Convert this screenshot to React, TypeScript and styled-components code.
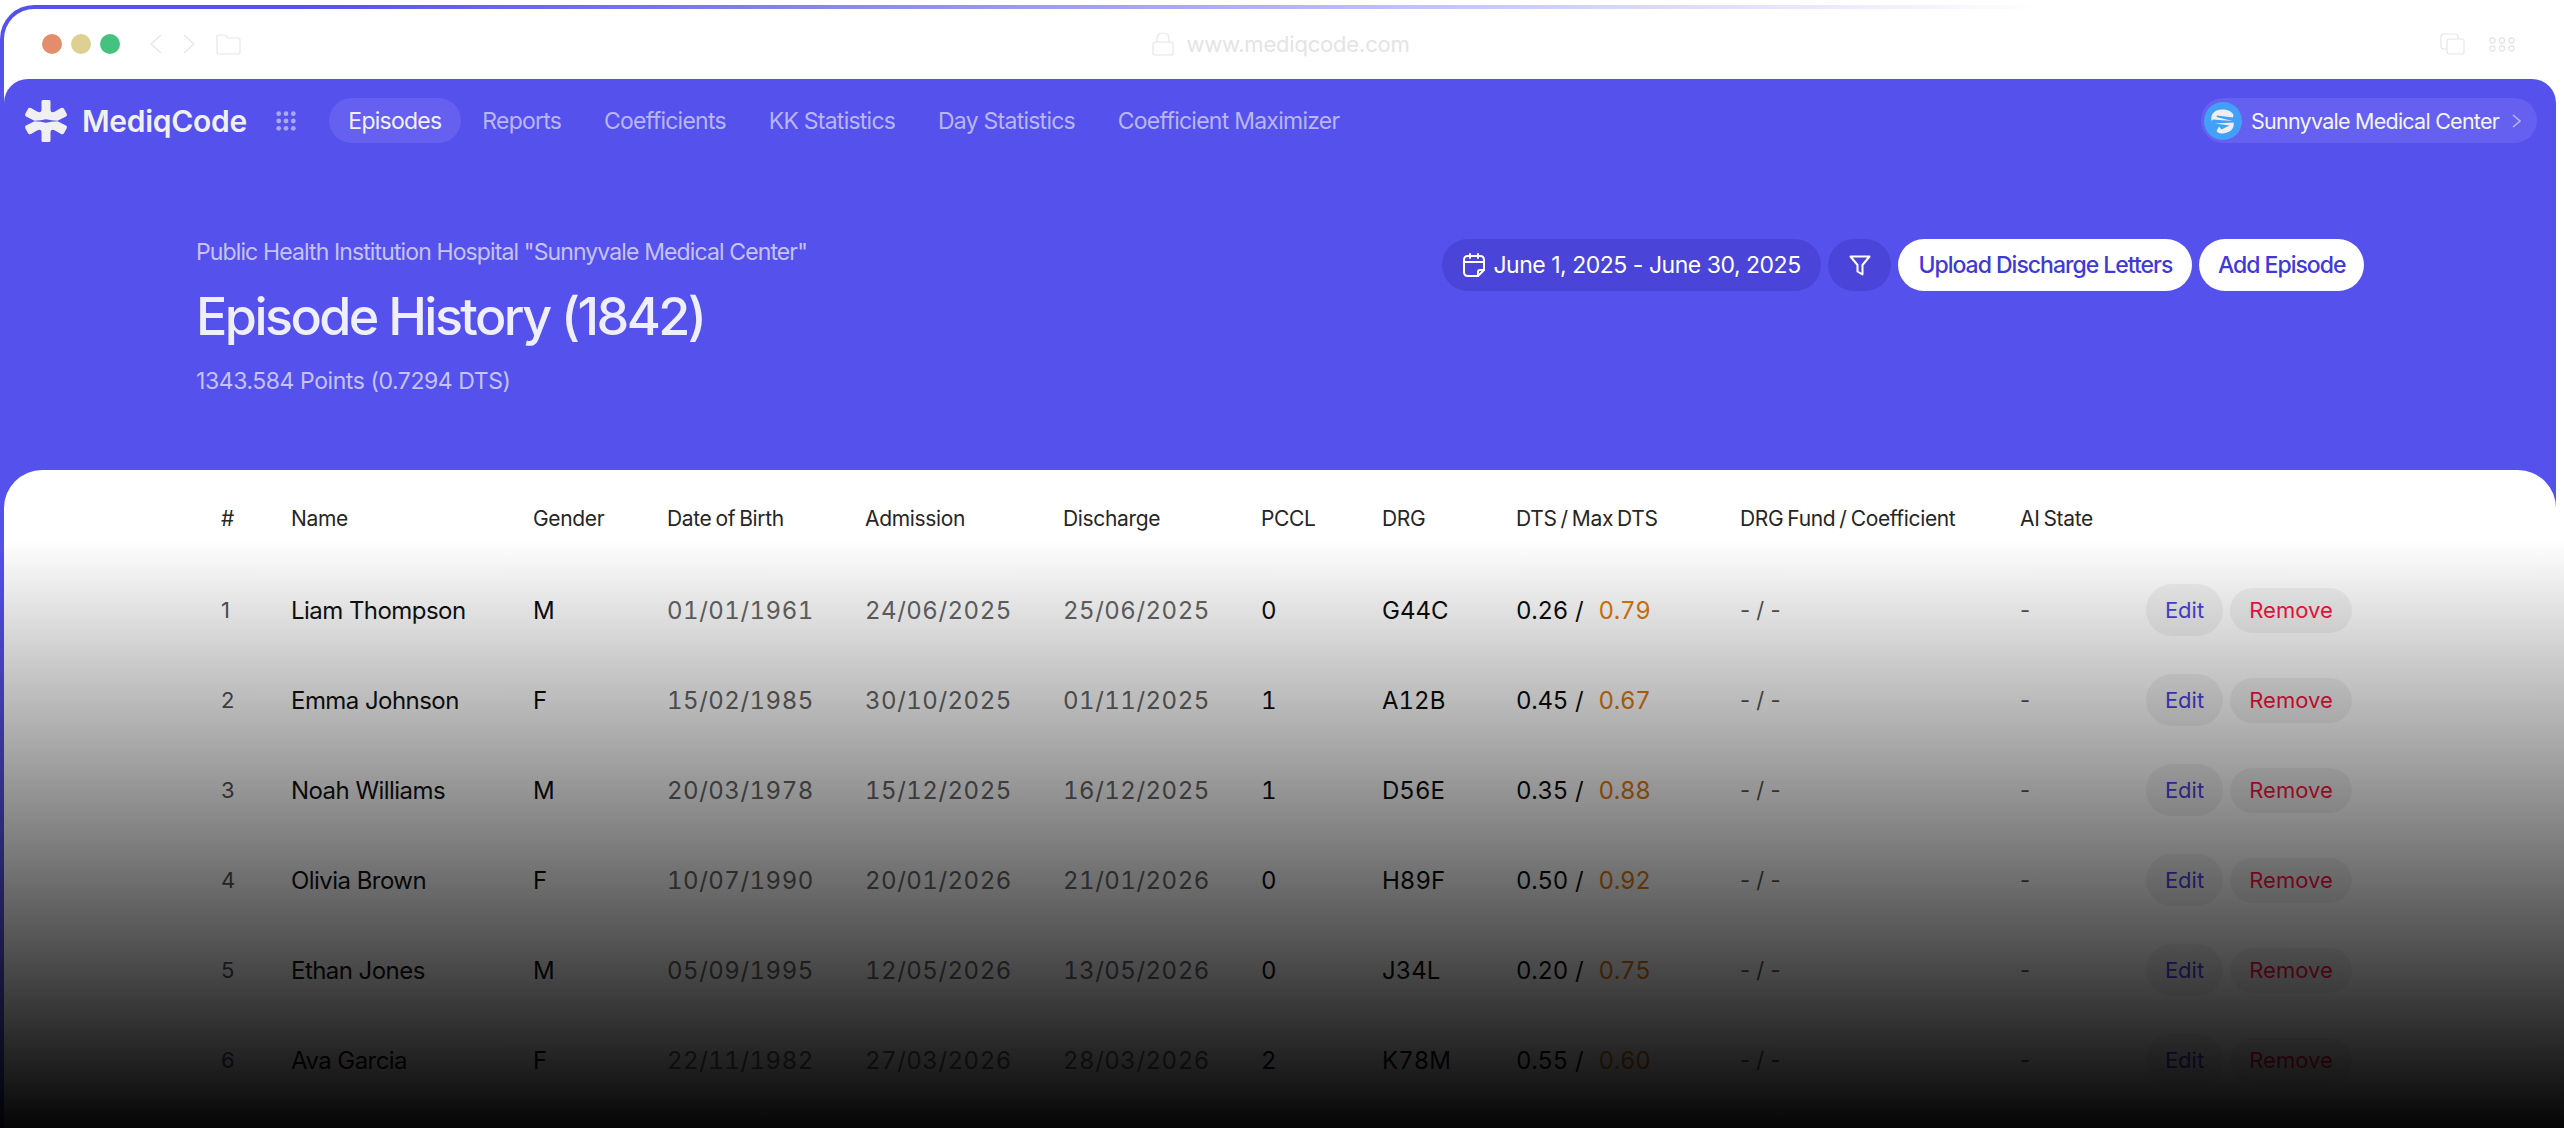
import React from "react";
import styled, { createGlobalStyle } from "styled-components";

const episodes = [
  { name: "Liam Thompson", gender: "M", dob: "01/01/1961", admission: "24/06/2025", discharge: "25/06/2025", pccl: "0", drg: "G44C", dts: "0.26", max: "0.79" },
  { name: "Emma Johnson", gender: "F", dob: "15/02/1985", admission: "30/10/2025", discharge: "01/11/2025", pccl: "1", drg: "A12B", dts: "0.45", max: "0.67" },
  { name: "Noah Williams", gender: "M", dob: "20/03/1978", admission: "15/12/2025", discharge: "16/12/2025", pccl: "1", drg: "D56E", dts: "0.35", max: "0.88" },
  { name: "Olivia Brown", gender: "F", dob: "10/07/1990", admission: "20/01/2026", discharge: "21/01/2026", pccl: "0", drg: "H89F", dts: "0.50", max: "0.92" },
  { name: "Ethan Jones", gender: "M", dob: "05/09/1995", admission: "12/05/2026", discharge: "13/05/2026", pccl: "0", drg: "J34L", dts: "0.20", max: "0.75" },
  { name: "Ava Garcia", gender: "F", dob: "22/11/1982", admission: "27/03/2026", discharge: "28/03/2026", pccl: "2", drg: "K78M", dts: "0.55", max: "0.60" },
];

const navItems = ["Reports", "Coefficients", "KK Statistics", "Day Statistics", "Coefficient Maximizer"];

const headers = ["#", "Name", "Gender", "Date of Birth", "Admission", "Discharge", "PCCL", "DRG", "DTS / Max DTS", "DRG Fund / Coefficient", "AI State"];

const LogoMark = () => (
  <svg width="52" height="52" viewBox="0 0 52 52" fill="#f0f0f0">
    <path d="M22.5 5H29.5Q30.5 5 30.5 7V14Q30.5 19 35 16.5L41 13Q43 12 44 13.8L46.7 18.8Q47.6 20.6 46 21.5L37.5 25.8Q31 25.6 26 24.2Q21 25.6 14.5 25.8L6 21.5Q4.4 20.6 5.3 18.8L8 13.8Q9 12 11 13L17 16.5Q21.5 19 21.5 14V7Q21.5 5 22.5 5Z" />
    <path d="M22.5 47H29.5Q30.5 47 30.5 45V38Q30.5 33 35 35.5L41 39Q43 40 44 38.2L46.7 33.2Q47.6 31.4 46 30.5L37.5 26.2Q31 26.4 26 27.8Q21 26.4 14.5 26.2L6 30.5Q4.4 31.4 5.3 33.2L8 38.2Q9 40 11 39L17 35.5Q21.5 33 21.5 38V45Q21.5 47 22.5 47Z" />
  </svg>
);

const SiteMark = () => (
  <svg width="38" height="38" viewBox="0 0 38 38">
    <circle cx="19" cy="19" r="19" fill="#42a0f8" />
    <path fill="#eeeeee" d="M7.5 19C6 12 11 7.5 18 7.5C23.5 7.5 27.5 9 29.5 13L29 15.5L13 13.5L12.5 15L28.5 19L9 17.5Z" />
    <path fill="#eeeeee" d="M11 21.5L29.5 20.5C31 26 26 31 19 31.5C16 31.5 13.5 31 12.5 29L15 24.5L17.5 27.5L25.5 23.5Z" />
  </svg>
);

const CalendarIcon = () => (
  <svg width="22" height="24" viewBox="0 0 22 24" fill="none" stroke="#fff" strokeWidth="2" strokeLinecap="round" strokeLinejoin="round">
    <path d="M15 23H5Q1 23 1 19V7Q1 3 5 3H17Q21 3 21 7V17Z" />
    <path d="M1 9H21M7 1V5M15 1V5" />
    <path d="M15 23V19Q15 17 17 17H21" />
  </svg>
);

const FunnelIcon = () => (
  <svg width="22" height="21" viewBox="0 0 22 21" fill="none" stroke="#fff" strokeWidth="2" strokeLinejoin="round">
    <path d="M1.5 1.5H20.5L13.5 10V19.5L8.5 16.5V10Z" />
  </svg>
);

const BackIcon = ({ flip }: { flip?: boolean }) => (
  <svg width="12" height="20" viewBox="0 0 12 20" fill="none" stroke="#e6e6e6" strokeWidth="1.2">
    <path d={flip ? "M1 1L11 10L1 19" : "M11 1L1 10L11 19"} />
  </svg>
);

const FolderIcon = () => (
  <svg width="25" height="21" viewBox="0 0 25 21" fill="none" stroke="#e6e6e6" strokeWidth="1.2">
    <path d="M1 3Q1 1 3 1H9L12 4H22Q24 4 24 6V18Q24 20 22 20H3Q1 20 1 18Z" />
  </svg>
);

const LockIcon = () => (
  <svg width="22" height="24" viewBox="0 0 22 24" fill="none" stroke="#e6e6e6" strokeWidth="1.2">
    <rect x="1" y="10" width="20" height="13" rx="2" />
    <path d="M5 10V7Q5 1 11 1Q17 1 17 7V10" />
  </svg>
);

const CopyIcon = () => (
  <svg width="25" height="22" viewBox="0 0 25 22" fill="none" stroke="#e6e6e6" strokeWidth="1.2">
    <rect x="7" y="6" width="17" height="15" rx="2" />
    <path d="M7 16H4Q1 16 1 13V4Q1 1 4 1H15Q18 1 18 4V6" />
  </svg>
);

const AppsIcon = () => (
  <svg width="26" height="15" viewBox="0 0 26 15" fill="none" stroke="#e2e2e2" strokeWidth="1.1">
    {[3.5, 13, 22.5].map((x) =>
      [3.5, 11.5].map((y) => <circle key={`${x}-${y}`} cx={x} cy={y} r="2.6" />)
    )}
  </svg>
);

const MenuDots = () => (
  <svg width="20" height="20" viewBox="0 0 20 20" fill="#aaa7f5">
    {[2.7, 10, 17.3].map((x) =>
      [2.7, 10, 17.3].map((y) => <circle key={`${x}-${y}`} cx={x} cy={y} r="2.4" />)
    )}
  </svg>
);

const App = () => {
  return (
    <Page>
      <GlobalStyle />
      <Frame>
        <Browser>
          <TitleBar>
            <BarGroup>
              <Light color="#e38d6c" />
              <Light color="#ddd093" />
              <Light color="#45c27f" />
              <BarNav>
                <BackIcon />
                <BackIcon flip />
                <FolderIcon />
              </BarNav>
            </BarGroup>
            <Address>
              <LockIcon />
              <span>www.mediqcode.com</span>
            </Address>
            <BarEnd>
              <CopyIcon />
              <AppsIcon />
            </BarEnd>
          </TitleBar>

          <Panel>
            <TopNav>
              <Brand>
                <LogoSlot>
                  <LogoMark />
                </LogoSlot>
                <BrandName>MediqCode</BrandName>
                <MenuDots />
              </Brand>
              <NavItem active>Episodes</NavItem>
              {navItems.map((item) => (
                <NavItem key={item}>{item}</NavItem>
              ))}
              <SitePicker>
                <SiteMark />
                <SiteName>Sunnyvale Medical Center</SiteName>
                <svg width="9" height="14" viewBox="0 0 9 14" fill="none" stroke="#b9b6f6" strokeWidth="1.5">
                  <path d="M1 1L8 7L1 13" />
                </svg>
              </SitePicker>
            </TopNav>

            <Hero>
              <div>
                <Hospital>Public Health Institution Hospital "Sunnyvale Medical Center"</Hospital>
                <Title>Episode History (1842)</Title>
                <Points>1343.584 Points (0.7294 DTS)</Points>
              </div>
              <HeroActions>
                <DarkPill>
                  <CalendarIcon />
                  <span>June 1, 2025 - June 30, 2025</span>
                </DarkPill>
                <DarkPill square>
                  <FunnelIcon />
                </DarkPill>
                <WhitePill>Upload Discharge Letters</WhitePill>
                <WhitePill compact>Add Episode</WhitePill>
              </HeroActions>
            </Hero>

            <Card>
              <HeadRow>
                {headers.map((h) => (
                  <HeadCell key={h}>{h}</HeadCell>
                ))}
              </HeadRow>
              {episodes.map((e, i) => (
                <Row key={e.name}>
                  <Muted>{i + 1}</Muted>
                  <Name>{e.name}</Name>
                  <Strong>{e.gender}</Strong>
                  <DateCell>{e.dob}</DateCell>
                  <DateCell>{e.admission}</DateCell>
                  <DateCell>{e.discharge}</DateCell>
                  <Strong>{e.pccl}</Strong>
                  <Strong>{e.drg}</Strong>
                  <Dts>
                    {e.dts} / <MaxDts>{e.max}</MaxDts>
                  </Dts>
                  <Muted>- / -</Muted>
                  <Muted>-</Muted>
                  <Actions>
                    <EditButton>Edit</EditButton>
                    <RemoveButton>Remove</RemoveButton>
                  </Actions>
                </Row>
              ))}
            </Card>
          </Panel>
        </Browser>
      </Frame>
      <Fade />
    </Page>
  );
};

export default App;

const GlobalStyle = createGlobalStyle`
  html, body {
    margin: 0;
    padding: 0;
    background: #fff;
  }
  body {
    font-family: Inter, "Liberation Sans", sans-serif;
  }
`;

const Page = styled.div`
  position: relative;
  width: 2564px;
  height: 1128px;
  overflow: hidden;
  background: #fff;
  padding-top: 5px;
  box-sizing: border-box;
`;

const Fade = styled.div`
  position: absolute;
  left: 0;
  right: 0;
  top: 540px;
  height: 588px;
  background: linear-gradient(to bottom, rgba(0, 0, 0, 0), rgba(0, 0, 0, 0.98));
  pointer-events: none;
`;

const Frame = styled.div`
  height: 100%;
  box-sizing: border-box;
  padding: 4px 0 0 4px;
  border-radius: 34px 0 0 0;
  background: linear-gradient(to right, #5551ec 0, #5551ec 300px, #ffffff 2040px);
`;

const Browser = styled.div`
  height: 100%;
  display: flex;
  flex-direction: column;
  background: #fff;
  border-radius: 30px 0 0 0;
`;

const TitleBar = styled.div`
  height: 70px;
  flex-shrink: 0;
  display: grid;
  grid-template-columns: 1fr auto 1fr;
  align-items: center;
  padding: 0 49px 0 38px;
  box-sizing: border-box;
`;

const BarGroup = styled.div`
  display: flex;
  align-items: center;
  gap: 9px;
`;

const Light = styled.div<{ color: string }>`
  width: 20px;
  height: 20px;
  border-radius: 50%;
  background-color: ${({ color }) => color};
`;

const BarNav = styled.div`
  display: flex;
  align-items: center;
  gap: 21px;
  margin-left: 21px;
`;

const Address = styled.div`
  display: flex;
  align-items: center;
  gap: 12px;
  margin-left: 5px;
  color: #e4e4e4;
  font-size: 22px;
  letter-spacing: -0.2px;
`;

const BarEnd = styled.div`
  display: flex;
  align-items: center;
  justify-content: flex-end;
  gap: 24px;
`;

const Panel = styled.div`
  flex: 1;
  min-height: 0;
  width: 2552px;
  display: flex;
  flex-direction: column;
  background-color: #5551ec;
  border-radius: 24px 24px 0 0;
`;

const TopNav = styled.div`
  display: flex;
  align-items: center;
  height: 45px;
  margin-top: 19px;
  padding: 0 19px 0 21px;
`;

const Brand = styled.div`
  display: flex;
  align-items: center;
  margin-right: 33px;
`;

const LogoSlot = styled.div`
  width: 42px;
  height: 45px;
  display: flex;
  align-items: center;
  justify-content: center;

  svg {
    flex-shrink: 0;
  }
`;

const BrandName = styled.div`
  margin: 0 29px 0 15px;
  color: #f0f0f0;
  font-size: 30px;
  font-weight: 600;
  letter-spacing: -0.3px;
`;

const NavItem = styled.div<{ active?: boolean }>`
  height: 45px;
  display: flex;
  align-items: center;
  padding: 0 ${({ active }) => (active ? "19.5px" : "21.4px")};
  border-radius: 23px;
  font-size: 23px;
  letter-spacing: -0.75px;
  color: ${({ active }) => (active ? "#f1f1fe" : "#b9b6f6")};
  background-color: ${({ active }) => (active ? "#6560ef" : "transparent")};
`;

const SitePicker = styled.div`
  margin-left: auto;
  width: 336px;
  height: 45px;
  box-sizing: border-box;
  display: flex;
  align-items: center;
  gap: 9px;
  padding-left: 3px;
  border-radius: 23px;
  background-color: #6560ef;
`;

const SiteName = styled.div`
  width: 252px;
  color: #f4f4ff;
  font-size: 21.5px;
  letter-spacing: -0.75px;
  white-space: nowrap;
`;

const Hero = styled.div`
  height: 327px;
  flex-shrink: 0;
  display: flex;
  justify-content: space-between;
  align-items: flex-start;
  padding: 0 192px;
  box-sizing: border-box;
`;

const Hospital = styled.div`
  margin-top: 94px;
  color: #c5c3f7;
  font-size: 23px;
  line-height: 30px;
  letter-spacing: -0.88px;
`;

const Title = styled.h1`
  margin: 18px 0 0;
  color: #eeeefc;
  font-size: 52px;
  line-height: 64px;
  font-weight: 500;
  letter-spacing: -2.55px;
`;

const Points = styled.div`
  margin-top: 17px;
  color: #c5c3f7;
  font-size: 23px;
  line-height: 30px;
  letter-spacing: -0.43px;
`;

const HeroActions = styled.div`
  display: flex;
  gap: 7px;
  margin-top: 96px;
`;

const DarkPill = styled.div<{ square?: boolean }>`
  height: 52px;
  width: ${({ square }) => (square ? "63px" : "379px")};
  box-sizing: border-box;
  display: flex;
  align-items: center;
  justify-content: ${({ square }) => (square ? "center" : "flex-start")};
  gap: 8px;
  padding-left: ${({ square }) => (square ? "0" : "21px")};
  border-radius: 26px;
  background-color: #4a45d8;
  color: #fff;
  font-size: 23px;
  letter-spacing: -0.48px;
`;

const WhitePill = styled.div<{ compact?: boolean }>`
  height: 52px;
  display: flex;
  align-items: center;
  padding: 0 ${({ compact }) => (compact ? "18.5px" : "20px")};
  border-radius: 26px;
  background-color: #fff;
  color: #3f39d8;
  font-size: 23px;
  font-weight: 500;
  letter-spacing: -1px;
`;

const Card = styled.div`
  flex: 1;
  padding: 17px 0 0 217px;
  background-color: #fff;
  border-radius: 38px 38px 0 0;
`;

const columns = "70px 242px 134px 198px 198px 198px 121px 134px 224px 280px 126px auto";

const HeadRow = styled.div`
  display: grid;
  grid-template-columns: ${columns};
  align-items: center;
  height: 62px;
  margin-bottom: 16px;
`;

const HeadCell = styled.div`
  color: #262626;
  font-size: 21px;
  letter-spacing: -0.35px;
  word-spacing: -1.5px;
  white-space: nowrap;
`;

const Row = styled.div`
  display: grid;
  grid-template-columns: ${columns};
  align-items: center;
  height: 90px;
  font-size: 24px;
`;

const Muted = styled.div`
  color: #555;
  font-size: 22px;
`;

const Name = styled.div`
  color: #111;
  letter-spacing: -0.55px;
  white-space: nowrap;
`;

const Strong = styled.div`
  color: #0c0c0c;
  font-variant-numeric: tabular-nums;
`;

const DateCell = styled.div`
  color: #666;
  font-variant-numeric: tabular-nums;
  letter-spacing: 0.5px;
`;

const Dts = styled.div`
  color: #0c0c0c;
  letter-spacing: -0.3px;
  word-spacing: 1px;
  font-variant-numeric: tabular-nums;
`;

const MaxDts = styled.span`
  margin-left: 8px;
  color: #de7a10;
`;

const Actions = styled.div`
  display: flex;
  align-items: center;
  gap: 7px;
  font-size: 22px;
`;

const EditButton = styled.div`
  width: 77px;
  height: 52px;
  display: flex;
  align-items: center;
  justify-content: center;
  border-radius: 26px;
  background-color: rgba(0, 0, 0, 0.05);
  color: #4a44e0;
`;

const RemoveButton = styled.div`
  width: 122px;
  height: 45px;
  display: flex;
  align-items: center;
  justify-content: center;
  border-radius: 23px;
  background-color: rgba(0, 0, 0, 0.05);
  color: #ff1242;
`;
